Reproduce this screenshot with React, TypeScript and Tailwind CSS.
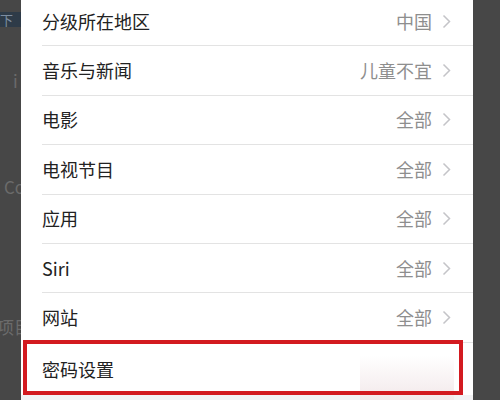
import React from 'react'

const rows = [
  { label: '分级所在地区', value: '中国' },
  { label: '音乐与新闻', value: '儿童不宜' },
  { label: '电影', value: '全部' },
  { label: '电视节目', value: '全部' },
  { label: '应用', value: '全部' },
  { label: 'Siri', value: '全部' },
  { label: '网站', value: '全部' },
]

const Chevron = () => (
  <svg width="9" height="15" viewBox="0 0 9 15" className="ml-[10px]">
    <path d="M1.5 1.5 L7.5 7.5 L1.5 13.5" fill="none" stroke="#c4c4c8" strokeWidth="1.5" />
  </svg>
)

const App = () => {
  return (
    <div
      className="w-[500px] h-[400px] bg-[#474747] flex overflow-hidden"
      style={{ fontFamily: '"Noto Sans CJK SC", "Noto Sans", sans-serif' }}
    >
      {/* LEFT - page behind the sheet */}
      <div className="w-[21px] shrink-0 relative text-[#6b6b6b] text-[17px]">
        <div className="absolute left-0 top-[12px] w-[21px] h-[15px] bg-[#2e3b48] flex items-center justify-end overflow-hidden">
          <span className="text-[13px] leading-none text-[#7d8da0] -mr-[2px]">—下—</span>
        </div>
        <div className="absolute left-[13px] top-[72px] leading-none">i</div>
        <div className="absolute left-[4px] top-[178px] leading-none whitespace-nowrap">Co</div>
        <div className="absolute -left-[3px] top-[318px] leading-none whitespace-nowrap">项目</div>
      </div>

      {/* SHEET */}
      <div className="w-[452px] shrink-0 bg-white flex flex-col -mt-[3px] relative">
        {rows.map((r) => (
          <div key={r.label} className="h-[49.4px] shrink-0 pl-[21px] flex">
            <div className="flex-1 flex items-center justify-between pr-[22px] border-b border-[#e3e3e3]">
              <span className="text-[18px] text-[#222]">{r.label}</span>
              <span className="flex items-center text-[18px] text-[#8e8e8e]">
                {r.value}
                <Chevron />
              </span>
            </div>
          </div>
        ))}
        <div className="h-[52px] shrink-0 pl-[21px] flex relative">
          <div className="flex-1 flex items-center pt-[2px]">
            <span className="text-[18px] text-[#222]">密码设置</span>
          </div>
          <div className="absolute left-[339px] top-[12px] w-[94px] h-[50px] bg-gradient-to-b from-white to-[#f1e6e8]" />
          <div className="absolute left-[2px] top-[-3px] w-[440px] h-[55px] border-[4px] border-[#d31a20]" />
        </div>
        <div className="flex-1 bg-[#f2f2f4]" />
      </div>

      {/* RIGHT */}
      <div className="flex-1" />
    </div>
  )
}

export default App
